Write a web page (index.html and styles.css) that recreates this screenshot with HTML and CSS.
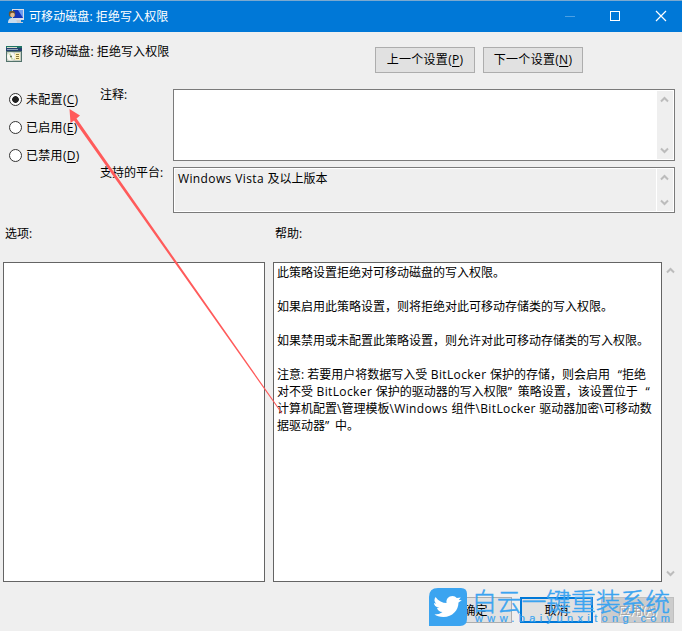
FILE: index.html
```html
<!DOCTYPE html>
<html lang="zh-CN">
<head>
<meta charset="utf-8">
<title>可移动磁盘: 拒绝写入权限</title>
<link rel="stylesheet" href="styles.css">
</head>
<body>
<div class="window">
  <header class="titlebar">
    <svg class="title-icon" width="16" height="16" viewBox="0 0 16 16">
      <rect x="4" y="0" width="12" height="11" fill="#d9dde8"/>
      <rect x="5" y="1" width="10" height="8" fill="#1636b8"/>
      <path d="M10 1h5v8z" fill="#6f9df0"/>
      <path d="M8 11h5v2h2v1H6v-1h2z" fill="#c9ccd3"/>
      <circle cx="4" cy="5" r="3.200" fill="#6e5530"/>
      <circle cx="4.500" cy="6" r="2.300" fill="#e4bd90"/>
      <path d="M0 14c0-4 2-5 4-5s5 1 5 5z" fill="#c9dcee"/>
    </svg>
    <h1>可移动磁盘: 拒绝写入权限</h1>
    <svg class="controls" width="102" height="12" viewBox="0 0 102 12" fill="none" shape-rendering="crispEdges">
      <path d="M0 6.500h10" stroke="#4ba0e4"/>
      <rect x="45.500" y="1.500" width="9" height="9" stroke="#fff"/>
      <path d="M91 1l10 10M101 1L91 11" stroke="#fff" stroke-width="1.200" shape-rendering="auto"/>
    </svg>
  </header>

  <section class="heading">
    <svg class="policy-icon" width="16" height="16" viewBox="0 0 16 16">
      <rect width="16" height="16" fill="#53736c"/>
      <path d="M0 0h16v2H0z" fill="#1f7465"/>
      <path d="M1 1h10v1H1z" fill="#d6dfc8"/>
      <path d="M0 2h16v3H0z" fill="#243f6d"/>
      <path d="M1 3h11v1H1z" fill="#8fa4b8"/>
      <rect x="1" y="6" width="14" height="9" fill="#c5cdc4"/>
      <circle cx="5" cy="10.500" r="4" fill="#f8f8f2"/>
      <path d="M5 10.500l-3-3h3zM5 10.500l3 3H5z" fill="#c9dca8"/>
      <circle cx="5" cy="10.500" r="1" fill="#586850"/>
      <rect x="9" y="7" width="5" height="7" fill="#fff1b5"/>
      <path d="M10 8.500h3M10 10.500h3M10 12.500h3" stroke="#8c7d42"/>
    </svg>
    <p>可移动磁盘: 拒绝写入权限</p>
    <button class="nav-button">上一个设置(<u>P</u>)</button>
    <button class="nav-button">下一个设置(<u>N</u>)</button>
  </section>

  <section class="settings">
    <div class="choices">
      <label><span class="radio selected"></span><span>未配置(<u>C</u>)</span></label>
      <label><span class="radio"></span><span>已启用(<u>E</u>)</span></label>
      <label><span class="radio"></span><span>已禁用(<u>D</u>)</span></label>
    </div>
    <div class="fields">
      <span class="field-label">注释:</span>
      <div class="field comment">
        <div class="field-text"></div>
        <div class="scroll"><svg width="9" height="7" viewBox="0 0 9 7"><path d="M1 5.500l3.500-3.500L8 5.500"/></svg><svg width="9" height="7" viewBox="0 0 9 7"><path d="M1 1.500L4.500 5L8 1.500"/></svg></div>
      </div>
      <span class="field-label">支持的平台:</span>
      <div class="field platform">
        <div class="field-text"><span class="latin">Windows Vista </span>及以上版本</div>
        <div class="scroll"><svg width="9" height="7" viewBox="0 0 9 7"><path d="M1 5.500l3.500-3.500L8 5.500"/></svg><svg width="9" height="7" viewBox="0 0 9 7"><path d="M1 1.500L4.500 5L8 1.500"/></svg></div>
      </div>
    </div>
  </section>

  <section class="panels">
    <h2>选项:</h2>
    <h2>帮助:</h2>
    <div class="panel"></div>
    <div class="panel help">
      <p>此策略设置拒绝对可移动磁盘的写入权限。</p>
      <p>如果启用此策略设置，则将拒绝对此可移动存储类的写入权限。</p>
      <p>如果禁用或未配置此策略设置，则允许对此可移动存储类的写入权限。</p>
      <p>注意: 若要用户将数据写入受<span class="latin"> BitLocker </span>保护的存储，则会启用<span class="quote open">“</span>拒绝<br>对不受<span class="latin"> BitLocker </span>保护的驱动器的写入权限<span class="quote">”</span>策略设置，该设置位于<span class="quote open">“</span><br>计算机配置\管理模板<span class="latin">\Windows </span>组件<span class="latin">\BitLocker </span>驱动器加密\可移动数<br>据驱动器<span class="quote">”</span>中。</p>
    </div>
    <div class="scroll outer"><svg width="9" height="7" viewBox="0 0 9 7"><path d="M1 5.500l3.500-3.500L8 5.500"/></svg><svg width="9" height="7" viewBox="0 0 9 7"><path d="M1 1.500L4.500 5L8 1.500"/></svg></div>
  </section>

  <footer class="actions">
    <button>确定</button>
    <button class="focused">取消</button>
    <button class="disabled">应用(<u>A</u>)</button>
  </footer>

  <svg class="arrow" width="682" height="631" viewBox="0 0 682 631">
    <path d="M69.500 109l1 14 3.500-2.500L281.500 413.500l.8-.6L76.500 118.500l3.500-3z" fill="#ff5b5b"/>
  </svg>

  <div class="watermark">
    <svg width="38" height="38" viewBox="0 0 38 38">
      <path d="M9 0h23q6 0 6 6v25q0 7-7 7H0V9q0-9 9-9z" fill="#3ba4f0"/>
      <path transform="translate(-2.500 0)" d="M9 9c3 4 7 6 11 6-.5-4 2-7 6-7 2 0 3 .7 4.300 2l4-.5-2 2.500 3 .2-3.300 2.300C32 22 26 29 17 29c-4 0-7-1-9-2.500 3 0 6-.8 8-2.500-3 0-5-2-5.500-4h2.300C9 19 7.500 17 7.500 15l2.300.7C7.500 14 7.500 11 9 9z" fill="#fff"/>
    </svg>
    <svg class="watermark-words" width="202" height="38" viewBox="0 0 202 38">
      <text class="brand" x="5" y="22.500" textLength="198" lengthAdjust="spacingAndGlyphs">白云一键重装系统</text>
      <text class="url" x="8" y="34" textLength="195">www.baiyunxitong.com</text>
    </svg>
  </div>
</div>
</body>
</html>
```
FILE: styles.css
```css
* { box-sizing: border-box; }
body {
  margin: 0;
  background: #efefef;
  color: #000;
  font: 12px/17px "Open Sans", "Noto Sans CJK SC", sans-serif;
}
h1, h2, p { margin: 0; font-size: 12px; font-weight: 400; white-space: nowrap; }
svg { display: block; flex: none; }
u { text-underline-offset: 2px; text-decoration-skip-ink: none; }
.window { position: relative; width: 682px; height: 631px; overflow: hidden; }
.titlebar {
  display: flex;
  align-items: center;
  height: 32px;
  padding: 0 15px 0 8px;
  border-top: 1px solid #7ba9cf;
  background: #0078d7;
  color: #fff;
}
.titlebar h1 { margin-left: 5px; letter-spacing: .08px; }
.controls { margin-left: auto; margin-top: -2px; }
.heading { display: flex; height: 57px; padding-left: 6px; }
.policy-icon { margin-top: 14px; }
.heading p { width: 345px; margin: 11px 0 0 8px; letter-spacing: .08px; }
button {
  height: 26px;
  padding: 0;
  border: 1px solid #adadad;
  background: #e1e1e1;
  color: #000;
  font: inherit;
}
.nav-button { width: 100px; margin: 15px 8px 0 0; padding-bottom: 1px; letter-spacing: .3px; }
.settings { display: flex; height: 135px; }
.choices { width: 100px; padding: 2px 0 0 9px; letter-spacing: .3px; }
.choices label { display: flex; align-items: center; height: 17px; margin-bottom: 11px; }
.radio { width: 13px; height: 13px; margin-right: 4px; border: 1px solid #333; border-radius: 50%; background: #fff; }
.selected { background: radial-gradient(circle, #222 0 3px, #fff 3.700px); }
.fields {
  display: grid;
  grid-template-columns: 73px 502px;
  grid-template-rows: 72px 46px;
  row-gap: 6px;
}
.field-label { margin-top: -3px; white-space: nowrap; }
.field { display: flex; padding: 1px; border: 1px solid #7a7a7a; background: #fff; }
.field-text { flex: 1; padding: 1px 3px; }
.latin { letter-spacing: .38px; }
.platform .field-text { margin-right: 1px; background: #efefef; }
.scroll {
  display: flex;
  flex-direction: column;
  align-items: center;
  justify-content: space-between;
  width: 16px;
  padding: 5px 2px 5px 0;
  background: #efefef;
}
.scroll path { fill: none; stroke: #bcbcbc; stroke-width: 2; }
.panels { display: grid; grid-template-columns: 262px 389px 16px; grid-template-rows: 38px 320px; column-gap: 8px; padding-left: 3px; }
.panels h2 { padding: 1px 0 0 2px; }
.panels h2:nth-child(2) { grid-column: 2 / 4; }
.panel { border: 1px solid #646464; background: #fff; }
.help { padding: 1px 0 0 3px; }
.help p { margin-bottom: 17px; }
.quote { display: inline-block; width: 10px; }
.open { width: 12px; text-align: right; }
.outer { margin-left: -7px; }
.actions { display: flex; gap: 8px; height: 47px; padding: 15px 0 0 439px; }
.actions button { width: 73px; }
.actions .focused { border: 2px solid #0078d7; }
.actions .disabled { border-color: #bfbfbf; background: #ccc; color: #a0a0a0; text-shadow: 1px 1px #fff; }
.arrow { position: absolute; top: 0; left: 0; pointer-events: none; }
.watermark { position: absolute; left: 429px; top: 588px; display: flex; }
.watermark-words { overflow: visible; }
.watermark text { fill: #3ba4f0; font-family: "Noto Sans CJK SC", sans-serif; }
.watermark .brand { font-size: 25px; font-weight: 300; stroke: #3ba4f0; stroke-width: .5px; }
.watermark .url { font: 11px "Liberation Sans", sans-serif; stroke: #3ba4f0; stroke-width: .2px; }
```
